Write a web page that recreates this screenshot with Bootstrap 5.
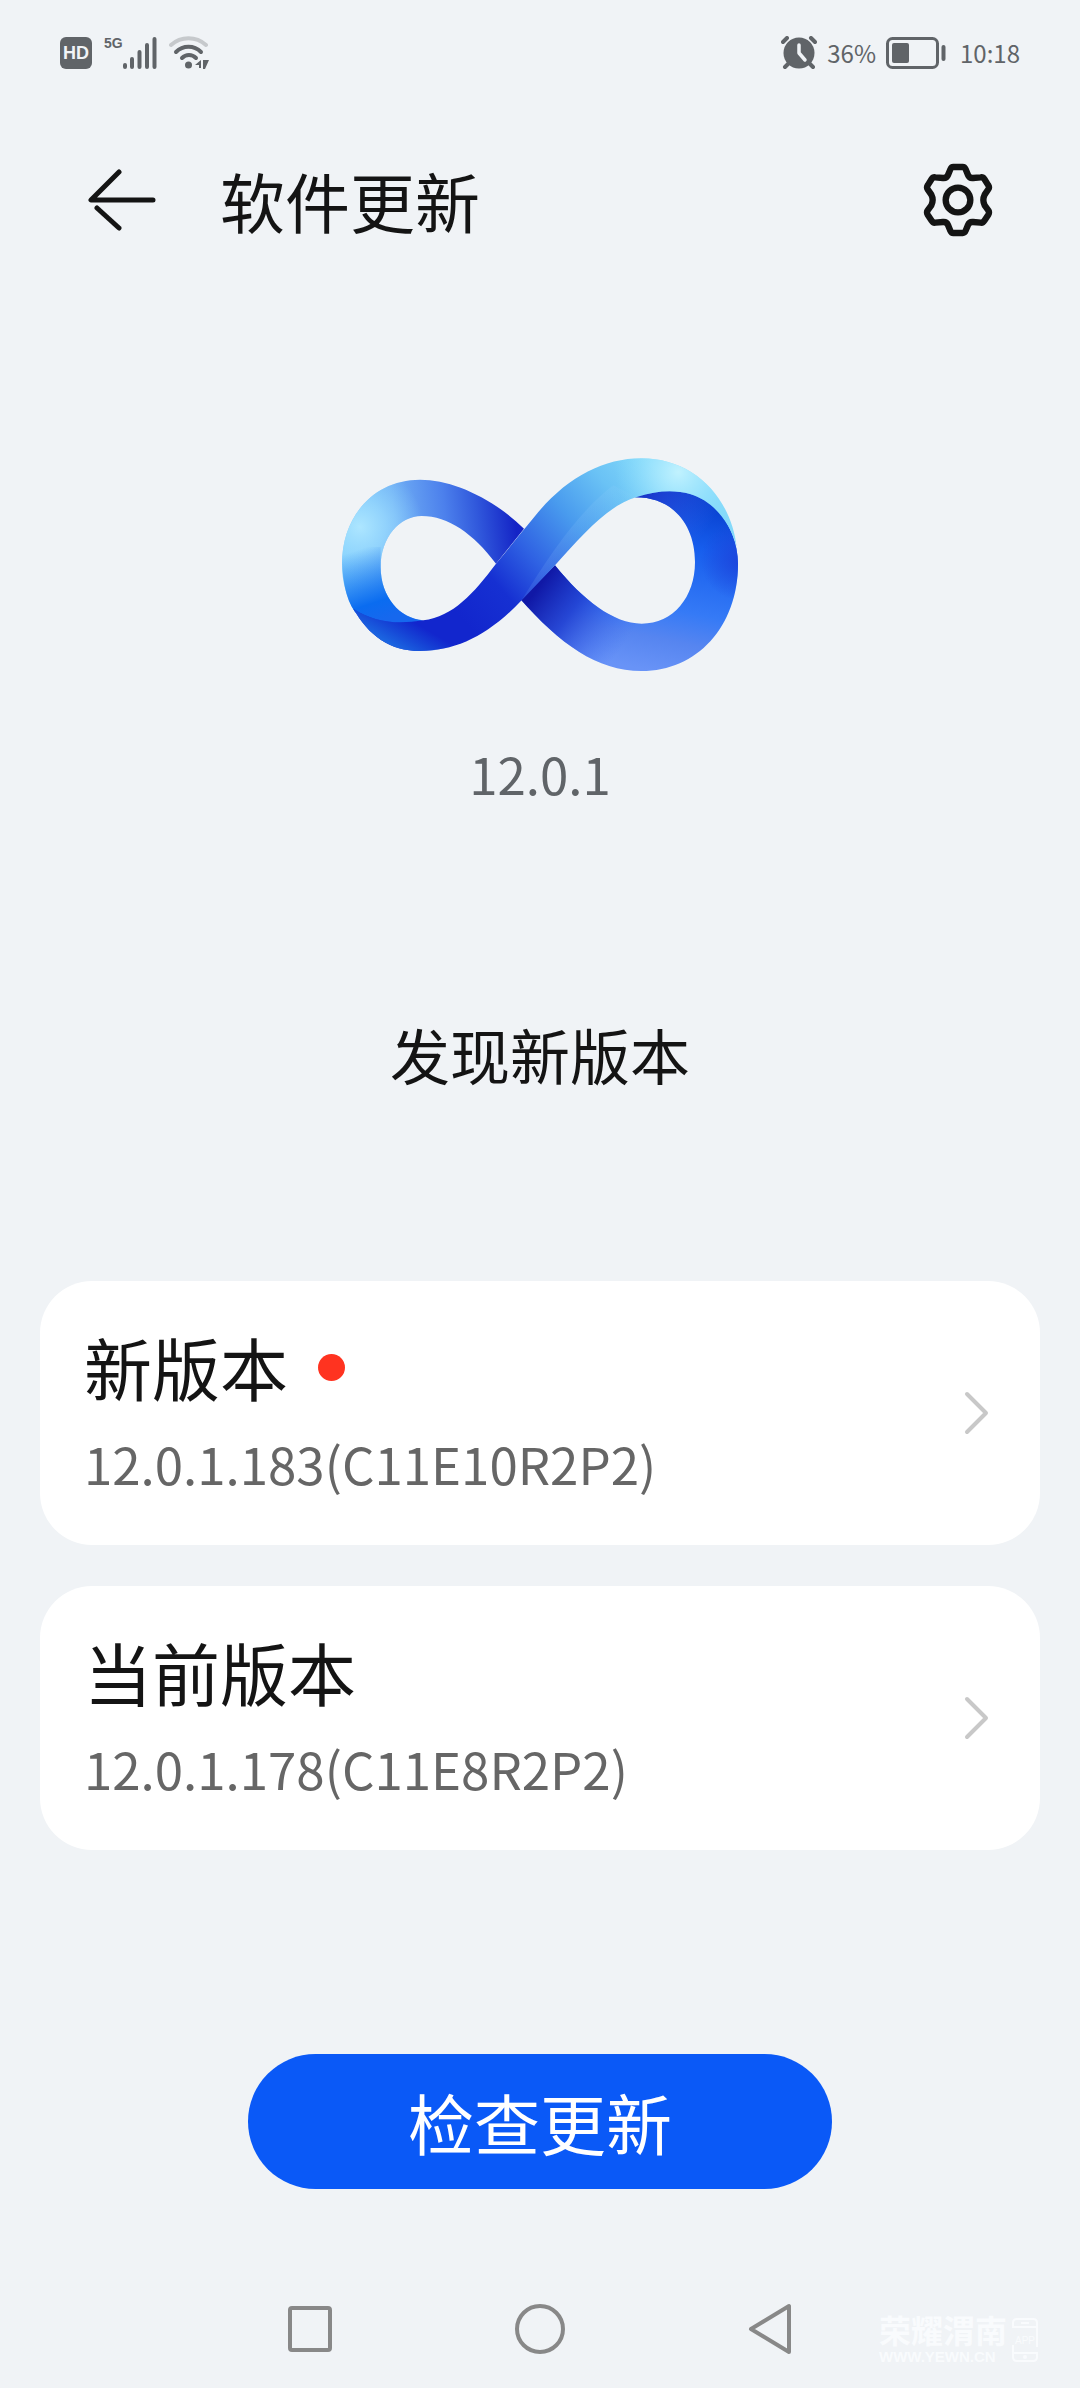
<!DOCTYPE html>
<html lang="zh-CN">
<head>
    <meta charset="UTF-8">
    <meta name="viewport" content="width=device-width, initial-scale=1.0">
    <title>软件更新</title>
    <link href="https://cdn.jsdelivr.net/npm/bootstrap@5.3.0/dist/css/bootstrap.min.css" rel="stylesheet">
    <style>
        body {
            background: #f0f3f6;
            color: #141414;
            font-family: "Noto Sans CJK SC", sans-serif;
        }
        svg { display: block; flex: none; }

        .status-bar { height: 106px; padding: 0 60px; color: #606468; font-size: 24px; line-height: 32px; }
        .status-left { gap: 12px; }
        .status-right { gap: 10px; }
        .hd-tag { width: 32px; height: 32px; border-radius: 6px; background: #606468; color: #f0f3f6; font-family: "Liberation Sans", sans-serif; font-size: 18px; font-weight: 700; }
        .net-type { font-family: "Liberation Sans", sans-serif; font-size: 14px; font-weight: 700; line-height: 14px; }

        .title-bar { margin-top: 54px; padding: 0 86px; }
        .title-bar h1 { margin-left: 64px; font-size: 65px; line-height: 80px; font-weight: 400; }

        .brand-mark { margin-top: 217px; }
        .os-version { margin-top: 61px; color: #606468; font-size: 51px; line-height: 80px; }
        .found-text { margin-top: 201px; font-size: 60px; line-height: 80px; }

        .version-list { margin-top: 187px; padding: 0 40px; gap: 41px; }
        .version-card { padding: 36px 50px 36px 44px; border-radius: 52px; color: #141414; }
        .version-name { font-size: 68px; line-height: 100px; gap: 30px; }
        .version-code { color: #666; font-size: 51px; line-height: 92px; }
        .new-dot { width: 27px; height: 27px; background: #ff3320; }

        .check-btn { width: 54%; margin-top: 204px; padding: 0; background: #0a59f7; color: #fff; font-size: 66px; line-height: 133px; }
        .check-btn:hover { background: #084fe0; color: #fff; }

        .sys-nav { height: 118px; }
        .sys-nav button { width: 230px; }

        .site-tag { right: 41px; bottom: 24px; color: #f9fbfd; gap: 4px; font-family: "Liberation Sans", "Noto Sans CJK SC", sans-serif; }
        .site-name { font-size: 32px; line-height: 34px; font-weight: 700; }
        .site-url { font-size: 15px; line-height: 15px; font-weight: 700; }
    </style>
</head>
<body>

<div class="d-flex flex-column min-vh-100 position-relative">

    <!-- Status bar -->
    <div class="status-bar d-flex justify-content-between align-items-center">
        <div class="status-left d-flex align-items-center">
            <span class="hd-tag d-flex align-items-center justify-content-center">HD</span>
            <div class="d-flex align-items-start">
                <span class="net-type">5G</span>
                <svg width="34" height="34" viewBox="2 0 34 34" stroke="#606468" stroke-width="4" stroke-linecap="round">
                    <path d="M4 29V31M11 23V31M18.500 16V31M26 9V31M33.500 3V31"/>
                </svg>
            </div>
            <svg width="42" height="34" viewBox="0 0 42 34" fill="none" stroke="#606468" stroke-width="4" stroke-linecap="round">
                <path d="M2 9C12 0 27 0 37 9" stroke="#c6c9cc"/>
                <path d="M7 16C14 9 25 9 32 16"/>
                <path d="M13 22C17 18 23 18 27 22"/>
                <circle cx="19.500" cy="29" r="3.500" fill="#606468" stroke="none"/>
                <path d="M32 24V32H30V29H26ZM34 24H40L36 33H34Z" fill="#606468" stroke="none"/>
            </svg>
        </div>
        <div class="status-right d-flex align-items-center">
            <svg width="36" height="34" viewBox="0 0 36 34" fill="none" stroke="#606468" stroke-width="4" stroke-linecap="round">
                <circle cx="18" cy="17" r="15.500" fill="#606468" stroke="none"/>
                <path d="M2 6L6 2M30 2L34 6M4 31L8 27M28 27L32 31"/>
                <path d="M18 9V17L24 24" stroke="#f0f3f6" stroke-width="3.500" stroke-linejoin="round"/>
            </svg>
            <span>36%</span>
            <svg width="60" height="32" viewBox="0 0 60 32">
                <rect x="1.500" y="1.500" width="50" height="29" rx="5" fill="none" stroke="#606468" stroke-width="3"/>
                <rect x="6" y="6" width="17" height="20" rx="2" fill="#606468"/>
                <path d="M57.500 10V22" stroke="#606468" stroke-width="4" stroke-linecap="round"/>
            </svg>
            <span class="ms-1">10:18</span>
        </div>
    </div>

    <!-- Title bar -->
    <header class="title-bar d-flex align-items-center">
        <a href="#" aria-label="返回">
            <svg width="70" height="62" viewBox="0 0 70 62" fill="none" stroke="#141414" stroke-width="5" stroke-linecap="round" stroke-linejoin="round">
                <path d="M33 3L5 31H67"/>
                <path d="M11 39L33 59"/>
            </svg>
        </a>
        <h1 class="mb-0">软件更新</h1>
        <button type="button" class="btn border-0 p-0 ms-auto" aria-label="设置">
            <svg width="72" height="74" viewBox="68 70 216 222" fill="none" stroke="#141414" stroke-width="19" stroke-linejoin="round">
                <path d="M162 82H190Q196 82 199 89L206 106Q210 116 221 115L244 113Q251 112 255 118L267 137Q271 143 267 149L256 165Q248 181 256 197L267 212Q271 218 267 225L255 243Q251 250 244 249L221 247Q210 246 206 256L199 273Q196 280 190 280H162Q156 280 153 273L146 256Q142 246 131 247L108 249Q101 250 97 243L85 225Q81 218 85 212L96 197Q104 181 96 165L85 149Q81 143 85 137L97 118Q101 112 108 113L131 115Q142 116 146 106L153 89Q156 82 162 82Z"/>
                <circle cx="176" cy="181" r="37"/>
            </svg>
        </button>
    </header>

    <main class="d-flex flex-column">
        <svg class="brand-mark align-self-center" width="400" height="215" viewBox="60 80 1200 645" role="img" aria-label="Magic UI">
            <defs>
                <linearGradient id="leftArm" gradientUnits="userSpaceOnUse" x1="80" y1="370" x2="590" y2="310">
                    <stop offset="0" stop-color="#79c9fb"/>
                    <stop offset=".3" stop-color="#72b1f5"/>
                    <stop offset=".6" stop-color="#4c80ec"/>
                    <stop offset=".78" stop-color="#3159dc"/>
                    <stop offset="1" stop-color="#1424c6"/>
                </linearGradient>
                <radialGradient id="leftGlow" gradientUnits="userSpaceOnUse" cx="120" cy="290" r="190">
                    <stop offset="0" stop-color="#ade6ff"/>
                    <stop offset=".4" stop-color="#9fdfff" stop-opacity=".7"/>
                    <stop offset="1" stop-color="#8fd8ff" stop-opacity="0"/>
                </radialGradient>
                <linearGradient id="leftLow" gradientUnits="userSpaceOnUse" x1="110" y1="360" x2="180" y2="570">
                    <stop offset="0" stop-color="#0a6cf0" stop-opacity="0"/>
                    <stop offset=".75" stop-color="#0a6cf0"/>
                    <stop offset="1" stop-color="#1668ee"/>
                </linearGradient>
                <linearGradient id="diagonal" gradientUnits="userSpaceOnUse" x1="430" y1="570" x2="990" y2="90">
                    <stop offset="0" stop-color="#1226cd"/>
                    <stop offset=".2" stop-color="#1630d2"/>
                    <stop offset=".38" stop-color="#2f62e3"/>
                    <stop offset=".6" stop-color="#499bee"/>
                    <stop offset=".8" stop-color="#6ac2f5"/>
                    <stop offset="1" stop-color="#84d9fa"/>
                </linearGradient>
                <linearGradient id="lowEdge" gradientUnits="userSpaceOnUse" x1="290" y1="580" x2="240" y2="665">
                    <stop offset="0" stop-color="#1767df" stop-opacity="0"/>
                    <stop offset="1" stop-color="#1c69e2"/>
                </linearGradient>
                <!-- keeps the lighter lower edge on the left end of the band -->
                <clipPath id="lowClip"><rect x="60" y="520" width="400" height="160"/></clipPath>
                <radialGradient id="topGlow" gradientUnits="userSpaceOnUse" cx="1075" cy="125" r="190">
                    <stop offset="0" stop-color="#c8f5ff" stop-opacity=".9"/>
                    <stop offset=".4" stop-color="#b0ecff" stop-opacity=".6"/>
                    <stop offset="1" stop-color="#8ce2ff" stop-opacity="0"/>
                </radialGradient>
                <linearGradient id="sheen" gradientUnits="userSpaceOnUse" x1="700" y1="300" x2="790" y2="370">
                    <stop offset="0" stop-color="#a8d8ff" stop-opacity=".16"/>
                    <stop offset="1" stop-color="#a8d8ff" stop-opacity=".04"/>
                </linearGradient>
                <linearGradient id="rightArm" gradientUnits="userSpaceOnUse" x1="1100" y1="180" x2="990" y2="720">
                    <stop offset="0" stop-color="#053bcb"/>
                    <stop offset=".3" stop-color="#175eed"/>
                    <stop offset=".65" stop-color="#357af6"/>
                    <stop offset=".82" stop-color="#5685f0"/>
                    <stop offset="1" stop-color="#6893f7"/>
                </linearGradient>
                <linearGradient id="rightShade" gradientUnits="userSpaceOnUse" x1="670" y1="450" x2="920" y2="630">
                    <stop offset="0" stop-color="#1018a6"/>
                    <stop offset=".4" stop-color="#1e3cd0" stop-opacity=".85"/>
                    <stop offset="1" stop-color="#3a6af0" stop-opacity="0"/>
                </linearGradient>
                <radialGradient id="rightEdge" gradientUnits="userSpaceOnUse" cx="1262" cy="390" r="120">
                    <stop offset="0" stop-color="#1d45dc"/>
                    <stop offset="1" stop-color="#1d45dc" stop-opacity="0"/>
                </radialGradient>
                <path id="armLeft" d="M612 295C520 205 400 148 300 148C160 148 66 260 66 400C66 455 80 505 105 545C165 590 240 585 310 570C240 565 182 500 182 410C182 320 240 257 305 257C385 257 460 310 528 400Z"/>
                <path id="armRight" d="M705 405C790 510 880 580 965 580C1060 580 1125 500 1125 395C1125 285 1060 200 945 201C1010 170 1100 170 1160 205C1220 255 1254 330 1254 400C1254 590 1130 722 965 722C830 722 720 640 600 505Z"/>
                <path id="band" d="M100 535C145 615 210 662 300 662C410 662 505 615 605 510L705 405C790 310 865 225 950 200C1010 180 1065 178 1110 191C1180 212 1230 275 1250 350C1232 195 1115 84 965 84C850 84 745 140 655 245C605 305 570 350 528 400C460 490 400 558 310 570C230 582 165 577 100 535Z"/>
            </defs>
            <use href="#armLeft" fill="url(#leftArm)"/>
            <use href="#armLeft" fill="url(#leftGlow)"/>
            <path d="M66 350C64 440 76 505 105 545C165 590 240 585 310 570C240 565 182 500 182 410L182 350Z" fill="url(#leftLow)"/>
            <use href="#armRight" fill="url(#rightArm)"/>
            <use href="#armRight" fill="url(#rightShade)"/>
            <use href="#armRight" fill="url(#rightEdge)"/>
            <use href="#band" fill="url(#diagonal)"/>
            <use href="#band" fill="url(#lowEdge)" clip-path="url(#lowClip)"/>
            <use href="#band" fill="url(#topGlow)"/>
            <path d="M605 510L705 405C790 310 865 225 950 200L880 165C780 240 690 370 605 510Z" fill="url(#sheen)"/>
        </svg>

        <div class="os-version text-center">12.0.1</div>
        <div class="found-text text-center">发现新版本</div>

        <div class="version-list d-flex flex-column">
            <a href="#" class="version-card card border-0 flex-row align-items-center justify-content-between text-decoration-none">
                <div>
                    <div class="version-name d-flex align-items-center">新版本<span class="new-dot rounded-circle"></span></div>
                    <div class="version-code">12.0.1.183(C11E10R2P2)</div>
                </div>
                <svg width="26" height="44" viewBox="0 0 26 44" fill="none" stroke="#c8c8c8" stroke-width="4" stroke-linecap="round" stroke-linejoin="round">
                    <path d="M3 3L22 22L3 41"/>
                </svg>
            </a>
            <a href="#" class="version-card card border-0 flex-row align-items-center justify-content-between text-decoration-none">
                <div>
                    <div class="version-name">当前版本</div>
                    <div class="version-code">12.0.1.178(C11E8R2P2)</div>
                </div>
                <svg width="26" height="44" viewBox="0 0 26 44" fill="none" stroke="#c8c8c8" stroke-width="4" stroke-linecap="round" stroke-linejoin="round">
                    <path d="M3 3L22 22L3 41"/>
                </svg>
            </a>
        </div>

        <button type="button" class="check-btn btn rounded-pill align-self-center">检查更新</button>
    </main>

    <!-- System navigation -->
    <nav class="sys-nav d-flex justify-content-center align-items-center mt-auto">
        <button type="button" class="btn border-0 p-0 d-flex justify-content-center" aria-label="最近任务">
            <svg width="46" height="48" viewBox="0 0 46 48" fill="none" stroke="#888" stroke-width="4">
                <rect x="3" y="3" width="40" height="42" rx="2"/>
            </svg>
        </button>
        <button type="button" class="btn border-0 p-0 d-flex justify-content-center" aria-label="主屏幕">
            <svg width="52" height="52" viewBox="0 0 52 52" fill="none" stroke="#888" stroke-width="4">
                <circle cx="26" cy="26" r="23"/>
            </svg>
        </button>
        <button type="button" class="btn border-0 p-0 d-flex justify-content-center" aria-label="返回上一页">
            <svg width="44" height="52" viewBox="0 0 44 52" fill="none" stroke="#888" stroke-width="4" stroke-linejoin="round">
                <path d="M41 3V49L3 26Z"/>
            </svg>
        </button>
    </nav>

    <div class="site-tag position-absolute d-flex align-items-center">
        <div>
            <div class="site-name">荣耀渭南</div>
            <div class="site-url">WWW.YEWN.CN</div>
        </div>
        <svg width="28" height="46" viewBox="0 0 28 46" fill="none" stroke="#f9fbfd" stroke-width="2">
            <path d="M2 28V40Q2 44 6 44H22Q26 44 26 40V36H2M26 30V6Q26 2 22 2H6Q2 2 2 6V10H26M10 6H18"/>
            <circle cx="14" cy="40" r="1"/>
            <text x="14" y="27" text-anchor="middle" font-size="10" fill="#f9fbfd" stroke="none">APP</text>
        </svg>
    </div>
</div>

<script src="https://cdn.jsdelivr.net/npm/bootstrap@5.3.0/dist/js/bootstrap.bundle.min.js"></script>
</body>
</html>
